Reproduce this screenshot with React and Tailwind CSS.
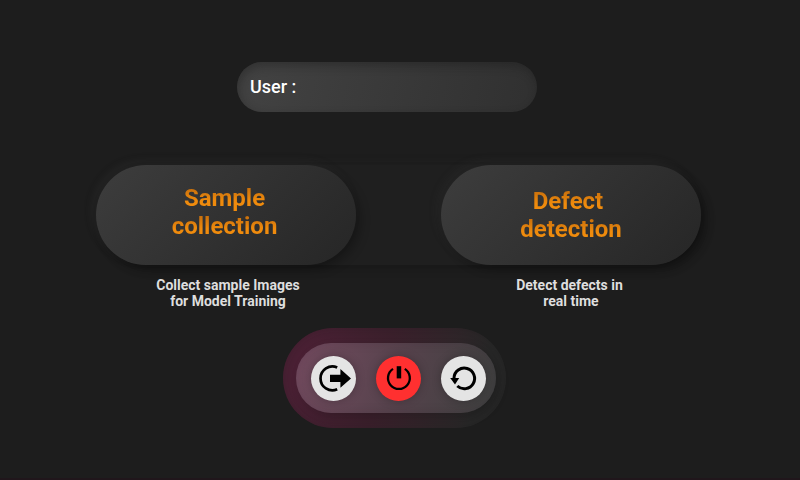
function ExitIcon() {
  return (
    <svg viewBox="0 0 45 45" className="size-[45px]">
      <path d="M26.2 11.5 A11.9 11.9 0 1 0 26.2 33.3" fill="none" stroke="#000" strokeWidth="2.7" />
      <path d="M19 18.7 H29.4 V13 L40 22.4 L29.4 31.8 V26 H19 Z" fill="#000" />
    </svg>
  );
}

function PowerIcon() {
  return (
    <svg viewBox="0 0 45 45" className="size-[45px]">
      <path d="M17 12.9 A10.9 10.9 0 1 0 28.8 12.9" fill="none" stroke="#000" strokeWidth="2.3" />
      <rect x="20.7" y="10.2" width="4.5" height="12.2" fill="#000" />
    </svg>
  );
}

function RestartIcon() {
  return (
    <svg viewBox="0 0 45 45" className="size-[45px]">
      <path d="M13 22 A10.3 10.3 0 1 1 16.3 30" fill="none" stroke="#000" strokeWidth="3" />
      <path d="M9.2 22 H18.2 L14 28.6 Z" fill="#000" />
    </svg>
  );
}

function ModeCard({ lines, caption, labelClass, firstLineClass, captionClass, lastLineClass }) {
  return (
    <div className="flex w-[260px] flex-col items-center">
      <button className={`flex h-[100px] w-[260px] shrink-0 flex-col items-center rounded-full bg-linear-135 from-[#3d3d3d] to-[#262626] text-2xl leading-7 font-bold shadow-[5px_5px_10px_rgba(0,0,0,0.25),-4px_-4px_10px_rgba(70,70,70,0.14)] ${labelClass}`}>
        {lines.map((line, i) => (
          <span key={line} className={`bg-linear-to-b from-[#c9700c] from-15% to-[#ef8b0d] to-60% bg-clip-text text-transparent ${i === 0 ? firstLineClass : ""}`}>{line}</span>
        ))}
      </button>
      <p className={`mt-3 shrink-0 text-center text-sm leading-4 font-bold text-[#dedede] ${captionClass}`}>
        <span className="block">{caption[0]}</span>
        <span className={`block ${lastLineClass}`}>{caption[1]}</span>
      </p>
    </div>
  );
}

export default function App() {
  return (
    <main className="flex h-[480px] w-[800px] flex-col overflow-hidden border-b-2 border-[#20161b] bg-[#1d1d1d] pt-[62px] font-['Roboto',sans-serif]">
      <div className="ml-[237px] flex h-[50px] w-[300px] shrink-0 items-center rounded-full bg-linear-105 from-[#434343] to-[#303030] pl-[13px] text-lg font-medium text-white shadow-[inset_2px_4px_10px_rgba(20,20,20,0.35)]">
        <span className="-mt-px">User :</span>
      </div>

      <section className="mt-[53px] ml-24 flex h-[100px] w-[605px] shrink-0 justify-between rounded-full bg-[#1f1f1f] shadow-[5px_5px_10px_rgba(0,0,0,0.12),-4px_-4px_10px_rgba(70,70,70,0.06)]">
        <ModeCard lines={["Sample", "collection"]} caption={["Collect sample Images", "for Model Training"]} labelClass="pt-[19px] pr-[3px]" firstLineClass="" captionClass="pl-1" lastLineClass="" />
        <ModeCard lines={["Defect", "detection"]} caption={["Detect defects in", "real time"]} labelClass="pt-[22px]" firstLineClass="pr-1.5" captionClass="pr-[3px]" lastLineClass="pl-[3px]" />
      </section>

      <nav className="mt-[63px] ml-[283px] flex h-[100px] w-[223px] shrink-0 items-center rounded-full bg-linear-105 from-[#4a2034] from-10% via-[#3b202c] via-45% to-[#282828] to-85% pl-[13px] shadow-[inset_0_0_12px_rgba(20,20,20,0.2)]">
        <div className="flex h-[70px] w-[200px] items-center gap-5 rounded-full bg-linear-105 from-[#744b60] via-[#54424b] via-55% to-[#414141] to-95% pl-[15px] shadow-[4px_4px_10px_rgba(0,0,0,0.2),inset_0_0_12px_rgba(30,20,25,0.12)]">
          <button aria-label="Exit" className="size-[45px] rounded-full bg-[#e4e4e4] shadow-[0_0_10px_rgba(0,0,0,0.25)]"><ExitIcon /></button>
          <button aria-label="Power" className="size-[45px] rounded-full bg-[#ff3030] shadow-[0_0_10px_rgba(0,0,0,0.25)]"><PowerIcon /></button>
          <button aria-label="Restart" className="size-[45px] rounded-full bg-[#e4e4e4] shadow-[0_0_10px_rgba(0,0,0,0.25)]"><RestartIcon /></button>
        </div>
      </nav>
    </main>
  );
}
